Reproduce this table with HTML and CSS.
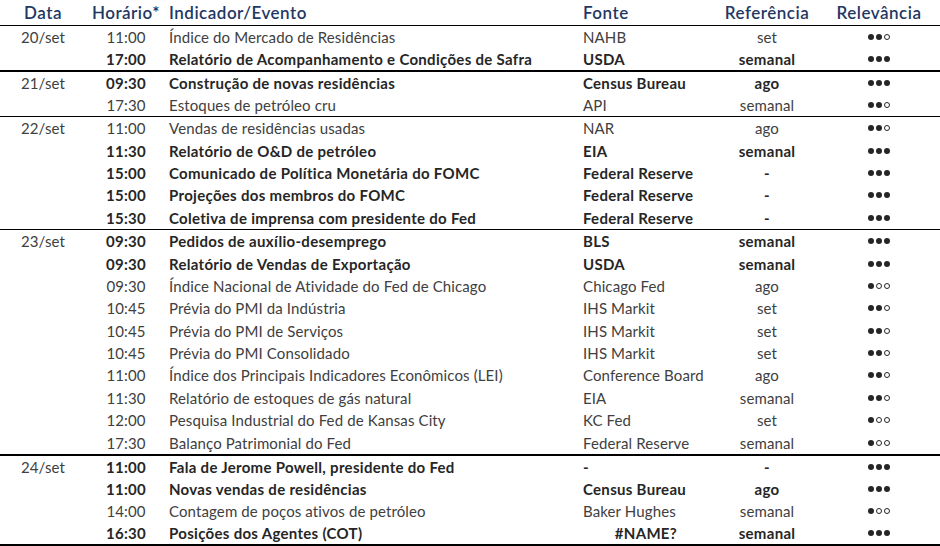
FILE: index.html
```html
<!DOCTYPE html>
<html lang="pt-BR">
<head>
<meta charset="utf-8">
<title>Agenda</title>
<link rel="stylesheet" href="styles.css">
</head>
<body>
<div class="table">
  <div class="row head">
    <div class="c-date">Data</div>
    <div class="c-time">Horário*</div>
    <div class="c-ind">Indicador/Evento</div>
    <div class="c-src">Fonte</div>
    <div class="c-ref">Referência</div>
    <div class="c-rel">Relevância</div>
  </div>

  <div class="group thick">
    <div class="row">
      <div class="c-date">20/set</div><div class="c-time">11:00</div><div class="c-ind">Índice do Mercado de Residências</div><div class="c-src">NAHB</div><div class="c-ref">set</div>
      <div class="c-rel"><span class="dot"></span><span class="dot"></span><span class="dot off"></span></div>
    </div>
    <div class="row b">
      <div class="c-date"></div><div class="c-time">17:00</div><div class="c-ind">Relatório de Acompanhamento e Condições de Safra</div><div class="c-src">USDA</div><div class="c-ref">semanal</div>
      <div class="c-rel"><span class="dot"></span><span class="dot"></span><span class="dot"></span></div>
    </div>
  </div>

  <div class="group">
    <div class="row b">
      <div class="c-date n">21/set</div><div class="c-time">09:30</div><div class="c-ind">Construção de novas residências</div><div class="c-src">Census Bureau</div><div class="c-ref">ago</div>
      <div class="c-rel"><span class="dot"></span><span class="dot"></span><span class="dot"></span></div>
    </div>
    <div class="row">
      <div class="c-date"></div><div class="c-time">17:30</div><div class="c-ind">Estoques de petróleo cru</div><div class="c-src">API</div><div class="c-ref">semanal</div>
      <div class="c-rel"><span class="dot"></span><span class="dot"></span><span class="dot off"></span></div>
    </div>
  </div>

  <div class="group tall">
    <div class="row">
      <div class="c-date">22/set</div><div class="c-time">11:00</div><div class="c-ind">Vendas de residências usadas</div><div class="c-src">NAR</div><div class="c-ref">ago</div>
      <div class="c-rel"><span class="dot"></span><span class="dot"></span><span class="dot off"></span></div>
    </div>
    <div class="row b">
      <div class="c-date"></div><div class="c-time">11:30</div><div class="c-ind">Relatório de O&amp;D de petróleo</div><div class="c-src">EIA</div><div class="c-ref">semanal</div>
      <div class="c-rel"><span class="dot"></span><span class="dot"></span><span class="dot"></span></div>
    </div>
    <div class="row b">
      <div class="c-date"></div><div class="c-time">15:00</div><div class="c-ind">Comunicado de Política Monetária do FOMC</div><div class="c-src">Federal Reserve</div><div class="c-ref">-</div>
      <div class="c-rel"><span class="dot"></span><span class="dot"></span><span class="dot"></span></div>
    </div>
    <div class="row b">
      <div class="c-date"></div><div class="c-time">15:00</div><div class="c-ind">Projeções dos membros do FOMC</div><div class="c-src">Federal Reserve</div><div class="c-ref">-</div>
      <div class="c-rel"><span class="dot"></span><span class="dot"></span><span class="dot"></span></div>
    </div>
    <div class="row b">
      <div class="c-date"></div><div class="c-time">15:30</div><div class="c-ind">Coletiva de imprensa com presidente do Fed</div><div class="c-src">Federal Reserve</div><div class="c-ref">-</div>
      <div class="c-rel"><span class="dot"></span><span class="dot"></span><span class="dot"></span></div>
    </div>
  </div>

  <div class="group tall thick">
    <div class="row b">
      <div class="c-date n">23/set</div><div class="c-time">09:30</div><div class="c-ind">Pedidos de auxílio-desemprego</div><div class="c-src">BLS</div><div class="c-ref">semanal</div>
      <div class="c-rel"><span class="dot"></span><span class="dot"></span><span class="dot"></span></div>
    </div>
    <div class="row b">
      <div class="c-date"></div><div class="c-time">09:30</div><div class="c-ind">Relatório de Vendas de Exportação</div><div class="c-src">USDA</div><div class="c-ref">semanal</div>
      <div class="c-rel"><span class="dot"></span><span class="dot"></span><span class="dot"></span></div>
    </div>
    <div class="row">
      <div class="c-date"></div><div class="c-time">09:30</div><div class="c-ind">Índice Nacional de Atividade do Fed de Chicago</div><div class="c-src">Chicago Fed</div><div class="c-ref">ago</div>
      <div class="c-rel"><span class="dot"></span><span class="dot off"></span><span class="dot off"></span></div>
    </div>
    <div class="row">
      <div class="c-date"></div><div class="c-time">10:45</div><div class="c-ind">Prévia do PMI da Indústria</div><div class="c-src">IHS Markit</div><div class="c-ref">set</div>
      <div class="c-rel"><span class="dot"></span><span class="dot"></span><span class="dot off"></span></div>
    </div>
    <div class="row">
      <div class="c-date"></div><div class="c-time">10:45</div><div class="c-ind">Prévia do PMI de Serviços</div><div class="c-src">IHS Markit</div><div class="c-ref">set</div>
      <div class="c-rel"><span class="dot"></span><span class="dot"></span><span class="dot off"></span></div>
    </div>
    <div class="row">
      <div class="c-date"></div><div class="c-time">10:45</div><div class="c-ind">Prévia do PMI Consolidado</div><div class="c-src">IHS Markit</div><div class="c-ref">set</div>
      <div class="c-rel"><span class="dot"></span><span class="dot"></span><span class="dot off"></span></div>
    </div>
    <div class="row">
      <div class="c-date"></div><div class="c-time">11:00</div><div class="c-ind">Índice dos Principais Indicadores Econômicos (LEI)</div><div class="c-src">Conference Board</div><div class="c-ref">ago</div>
      <div class="c-rel"><span class="dot"></span><span class="dot"></span><span class="dot off"></span></div>
    </div>
    <div class="row">
      <div class="c-date"></div><div class="c-time">11:30</div><div class="c-ind">Relatório de estoques de gás natural</div><div class="c-src">EIA</div><div class="c-ref">semanal</div>
      <div class="c-rel"><span class="dot"></span><span class="dot"></span><span class="dot off"></span></div>
    </div>
    <div class="row">
      <div class="c-date"></div><div class="c-time">12:00</div><div class="c-ind">Pesquisa Industrial do Fed de Kansas City</div><div class="c-src">KC Fed</div><div class="c-ref">set</div>
      <div class="c-rel"><span class="dot"></span><span class="dot off"></span><span class="dot off"></span></div>
    </div>
    <div class="row">
      <div class="c-date"></div><div class="c-time">17:30</div><div class="c-ind">Balanço Patrimonial do Fed</div><div class="c-src">Federal Reserve</div><div class="c-ref">semanal</div>
      <div class="c-rel"><span class="dot"></span><span class="dot off"></span><span class="dot off"></span></div>
    </div>
  </div>

  <div class="group thick">
    <div class="row b">
      <div class="c-date n">24/set</div><div class="c-time">11:00</div><div class="c-ind">Fala de Jerome Powell, presidente do Fed</div><div class="c-src">-</div><div class="c-ref">-</div>
      <div class="c-rel"><span class="dot"></span><span class="dot"></span><span class="dot"></span></div>
    </div>
    <div class="row b">
      <div class="c-date"></div><div class="c-time">11:00</div><div class="c-ind">Novas vendas de residências</div><div class="c-src">Census Bureau</div><div class="c-ref">ago</div>
      <div class="c-rel"><span class="dot"></span><span class="dot"></span><span class="dot"></span></div>
    </div>
    <div class="row">
      <div class="c-date"></div><div class="c-time">14:00</div><div class="c-ind">Contagem de poços ativos de petróleo</div><div class="c-src">Baker Hughes</div><div class="c-ref">semanal</div>
      <div class="c-rel"><span class="dot"></span><span class="dot off"></span><span class="dot off"></span></div>
    </div>
    <div class="row b">
      <div class="c-date"></div><div class="c-time">16:30</div><div class="c-ind">Posições dos Agentes (COT)</div><div class="c-src err">#NAME?</div><div class="c-ref">semanal</div>
      <div class="c-rel"><span class="dot"></span><span class="dot"></span><span class="dot"></span></div>
    </div>
  </div>
</div>
</body>
</html>
```

FILE: styles.css
```css
html, body {
  margin: 0;
  padding: 0;
  background: #ffffff;
}

body {
  font-family: Lato, "Noto Sans", "Liberation Sans", sans-serif;
  font-size: 15px;
  letter-spacing: 0.12px;
  color: #404040;
}

.table {
  width: 940px;
}

.row {
  display: grid;
  grid-template-columns: 86px 80px 417px 127px 114px 110px 1fr;
  align-items: center;
  height: 22px;
  line-height: 22px;
  white-space: nowrap;
}

.group.tall .row {
  height: 22.4px;
}

.head {
  height: 25px;
  line-height: 24px;
  border-bottom: 1px solid #000000;
  color: #1f3864;
  font-size: 17px;
  font-weight: 600;
  letter-spacing: 0.5px;
}

.group {
  border-bottom: 1px solid #000000;
}

.group.thick {
  border-bottom: 2px solid #000000;
}

.c-date {
  text-align: center;
}

.c-time {
  text-align: center;
}

.c-ind {
  padding-left: 3px;
}

.c-src {
  text-align: left;
}

.c-src.err {
  text-align: right;
  padding-right: 33px;
}

.c-ref {
  text-align: center;
}

.c-rel {
  display: flex;
  justify-content: center;
  align-items: center;
  gap: 2px;
}

.b {
  font-weight: 700;
  color: #262626;
  letter-spacing: 0.3px;
}

.b .c-date {
  font-weight: 400;
  color: #404040;
  letter-spacing: 0.12px;
}

.dot {
  display: inline-block;
  width: 6px;
  height: 6px;
  border-radius: 50%;
  background: #262626;
  box-sizing: border-box;
}

.dot.off {
  background: transparent;
  border: 1px solid #262626;
}
```
